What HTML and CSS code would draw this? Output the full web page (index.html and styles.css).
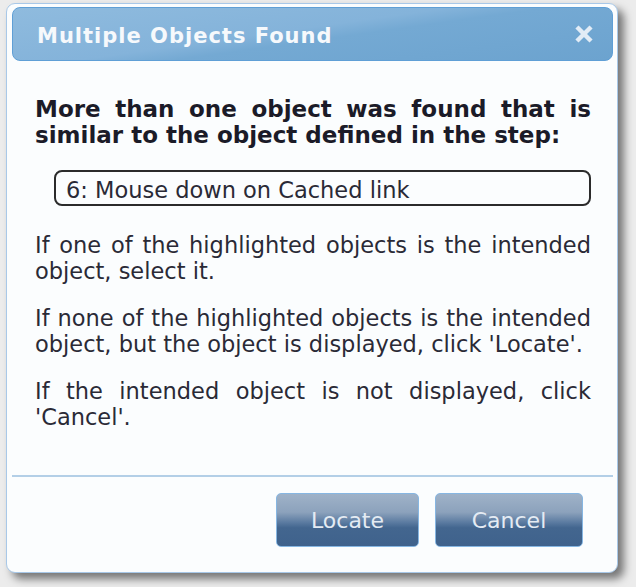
FILE: index.html
```html
<!DOCTYPE html>
<html>
<head>
<meta charset="utf-8">
<link rel="stylesheet" href="styles.css">
</head>
<body>
<div class="dialog">
  <div class="titlebar">
    <span class="title">Multiple Objects Found</span>
    <svg class="close" width="18" height="18" viewBox="0 0 18 18" aria-label="Close">
      <path d="M3.5 3.5 L14.5 14.5 M14.5 3.5 L3.5 14.5" stroke="#e2ecf6" stroke-width="4.4" stroke-linecap="square" fill="none"/>
    </svg>
  </div>
  <div class="content">
    <p class="lead">More than one object was found that is similar to the object defined in the step:</p>
    <div class="step">6: Mouse down on Cached link</div>
    <p class="info first">If one of the highlighted objects is the intended object, select it.</p>
    <p class="info">If none of the highlighted objects is the intended object, but the object is displayed, click 'Locate'.</p>
    <p class="info">If the intended object is not displayed, click 'Cancel'.</p>
  </div>
  <div class="separator"></div>
  <div class="actions">
    <button class="btn btn-locate">Locate</button>
    <button class="btn btn-cancel">Cancel</button>
  </div>
</div>
</body>
</html>
```
FILE: styles.css
```css
html, body {
  margin: 0;
  padding: 0;
}
body {
  background: #ececec;
  width: 636px;
  height: 587px;
  overflow: hidden;
  font-family: "DejaVu Sans", Verdana, sans-serif;
}
.dialog {
  box-sizing: border-box;
  margin: 3px 0 0 6px;
  width: 612px;
  height: 570px;
  border: 1px solid #a8c8e8;
  border-radius: 9px;
  background: #fbfdfe;
  box-shadow: 6px 6px 8px rgba(0, 0, 0, 0.5);
  padding: 3px 4px 0 5px;
  display: flex;
  flex-direction: column;
}
.titlebar {
  box-sizing: border-box;
  height: 54px;
  border: 1px solid #5f9fd6;
  border-radius: 8px;
  background: linear-gradient(172deg, #8fbbde 0%, #84b3da 45%, #74a9d3 55%, #6ca3cf 100%);
  display: flex;
  align-items: center;
  justify-content: space-between;
  padding: 4px 19px 0 24px;
}
.title {
  color: #f6f9fc;
  font-weight: bold;
  font-size: 21px;
  letter-spacing: 1px;
}
.close {
  display: block;
  margin-top: -4px;
}
.content {
  margin-top: 35px;
  padding: 0 22px 0 23px;
}
.lead {
  margin: 0;
  font-weight: bold;
  font-size: 23px;
  line-height: 26px;
  color: #1b1b28;
  text-align: justify;
}
.step {
  box-sizing: border-box;
  margin: 22px 0 0 19px;
  height: 36px;
  border: 2px solid #2b2b2b;
  border-radius: 8px;
  padding: 5px 10px 1px;
  font-size: 22.5px;
  line-height: 26px;
  color: #2a2a36;
  white-space: nowrap;
}
.info {
  margin: 21px 0 0;
  font-size: 22.5px;
  line-height: 26px;
  color: #2a2a36;
  text-align: justify;
}
.info.first {
  margin-top: 26px;
}
.separator {
  margin-top: 45px;
  height: 0;
  border-top: 2px solid #b3cfe7;
}
.actions {
  margin-top: 16px;
  display: flex;
  justify-content: flex-end;
  gap: 16px;
  padding-right: 30px;
}
.btn {
  box-sizing: border-box;
  height: 54px;
  border: 1px solid #86b6e2;
  border-radius: 5px;
  background: linear-gradient(#9fb2c8 0%, #8ca2bc 35%, #5a7aa0 55%, #43668f 65%, #3f628c 100%);
  color: #e4ebf3;
  font-family: "DejaVu Sans", Verdana, sans-serif;
  font-size: 22px;
  padding: 0;
}
.btn-locate {
  width: 143px;
}
.btn-cancel {
  width: 148px;
}
```
